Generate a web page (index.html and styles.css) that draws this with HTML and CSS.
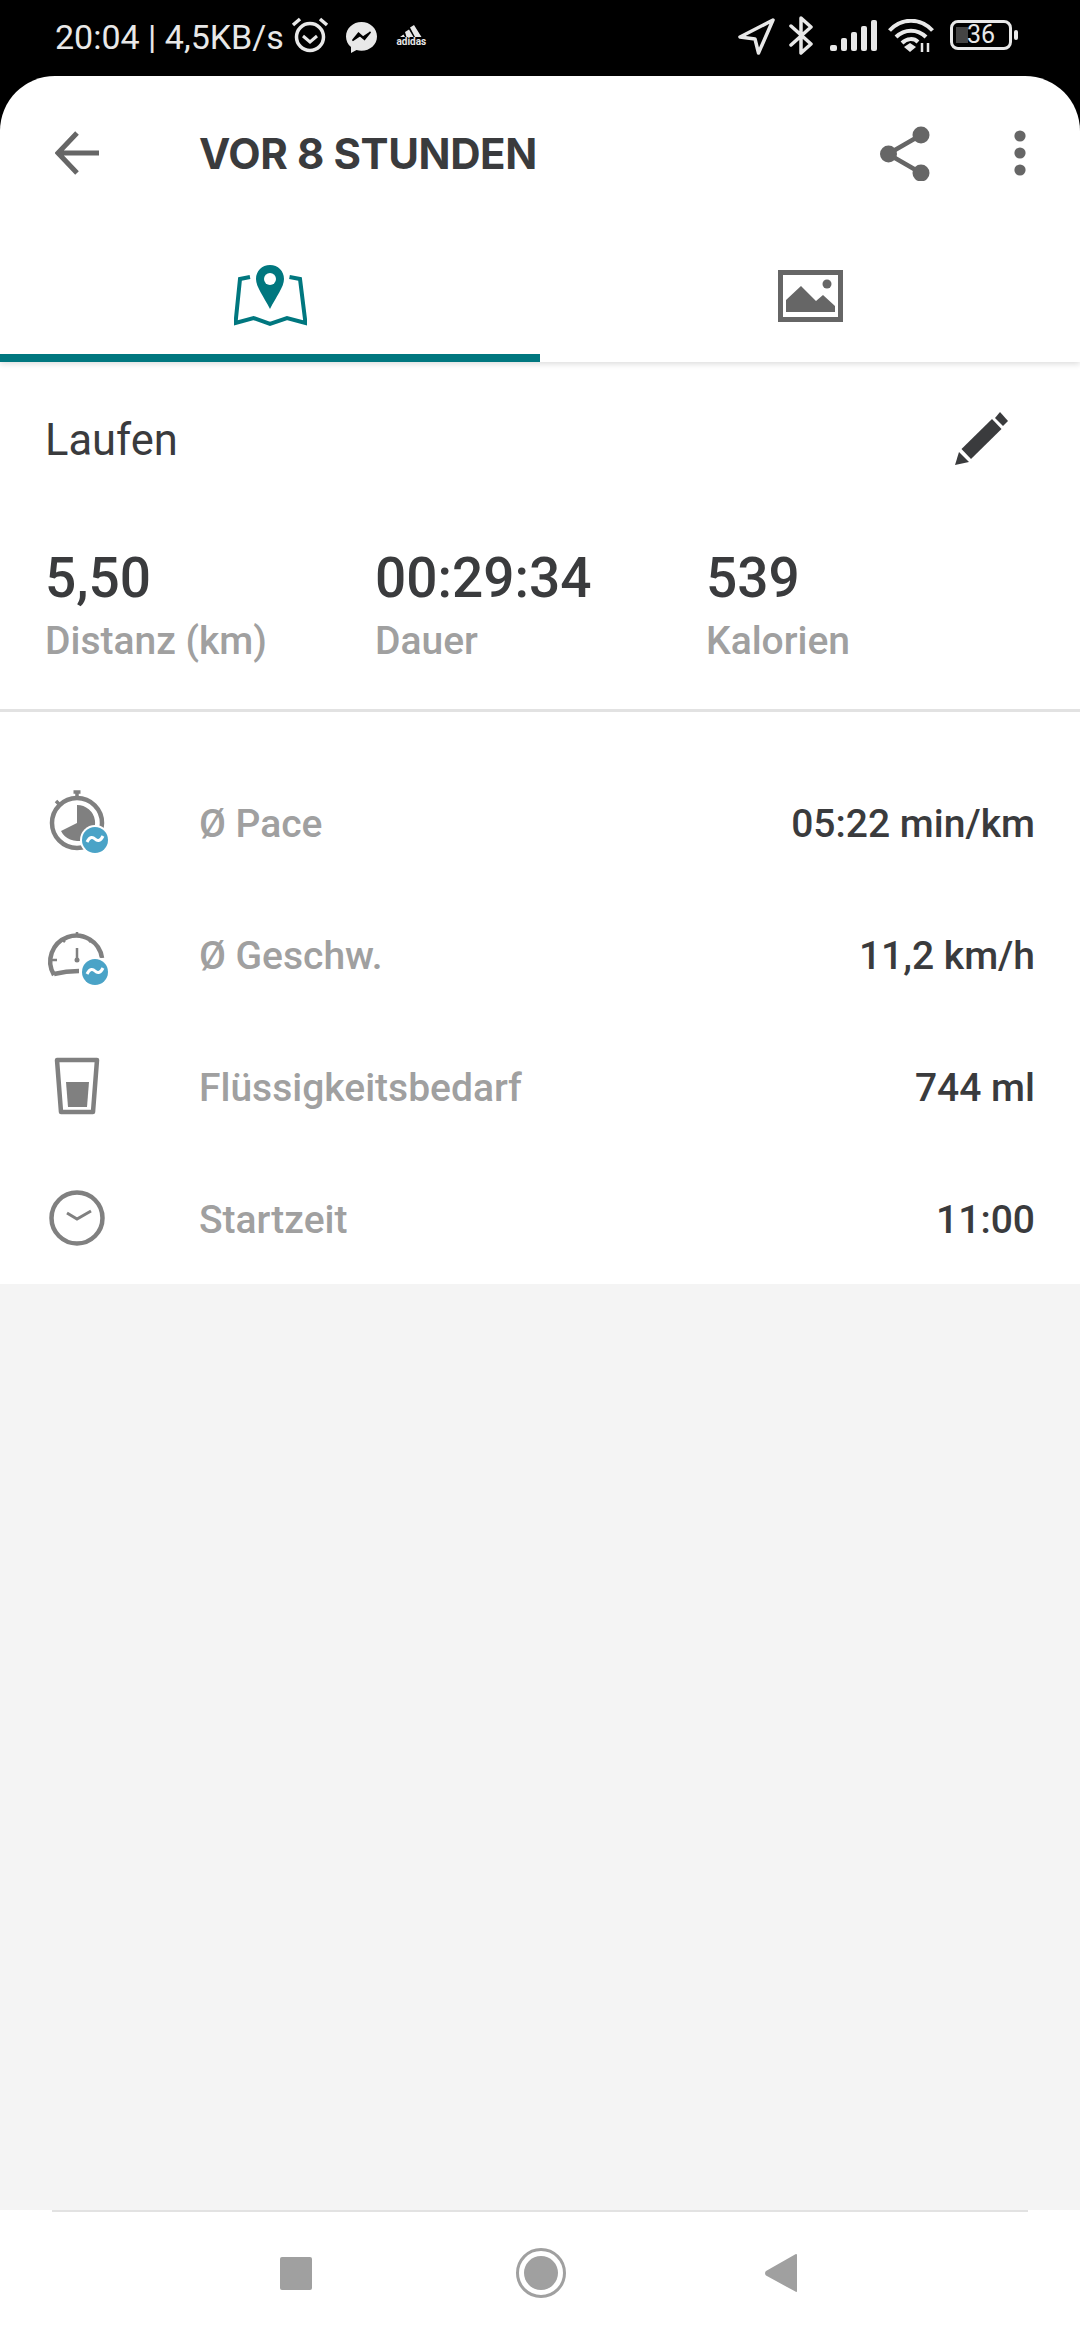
FILE: index.html
```html
<!DOCTYPE html>
<html>
<head>
<meta charset="utf-8">
<title>Laufen</title>
<link rel="stylesheet" href="styles.css">
</head>
<body>
<!-- status bar -->
<div class="statusbar">
    <div class="status-left">
        <span class="status-text">20:04 | 4,5KB/s</span>
        <svg class="st-alarm" width="38" height="36" viewBox="0 0 38 36" fill="none" stroke="#e8e8e8">
            <circle cx="19" cy="20" r="13.5" stroke-width="3.5"/>
            <path d="M12 19l7 6 7-6" stroke-width="3"/>
            <path d="M2 8l7-6M36 8l-7-6" stroke-width="3.5"/>
        </svg>
        <svg class="st-msg" width="31" height="31" viewBox="0 0 31 31">
            <path d="M15.5 0C7 0 0 6.300 0 14.500c0 4.300 1.900 8 5 10.600V31l5.500-3c1.600.5 3.200.7 5 .7 8.500 0 15.500-6 15.500-14.200S24 0 15.500 0z" fill="#e8e8e8"/>
            <path d="M6.500 18.500l6-7.500 4.500 4 7.500-5-6 7.500-4.500-3.800z" fill="#000" stroke="#000" stroke-width="1.500"/>
        </svg>
        <div class="st-adidas">
            <svg width="24" height="13" viewBox="0 0 24 13" fill="#e8e8e8">
                <path d="M1 13l3.500-2.500L6 13zM7.500 13L6 8l4-2.500L14.500 13zM16 13L11 3.500 15 1l7.500 12z"/>
            </svg>
            <span>adidas</span>
        </div>
    </div>
    <div class="status-right">
        <svg class="st-loc" width="37" height="37" viewBox="0 0 37 37" fill="none" stroke="#e8e8e8" stroke-width="3.500" stroke-linejoin="round">
            <path d="M35 2L2 19l15 2 3.500 14z"/>
        </svg>
        <svg class="st-bt" width="25" height="39" viewBox="0 0 25 39" fill="none" stroke="#e8e8e8" stroke-width="3.500" stroke-linejoin="round" stroke-linecap="round">
            <path d="M2 10l20 18-10 9V2l10 9L2 29"/>
        </svg>
        <svg class="st-signal" width="48" height="31" viewBox="0 0 48 31" fill="#e8e8e8">
            <rect x="0" y="25" width="7" height="6" rx="2"/>
            <rect x="11" y="18" width="6" height="13" rx="2"/>
            <rect x="21" y="12" width="6" height="19" rx="2"/>
            <rect x="31" y="6" width="6" height="25" rx="2"/>
            <rect x="41" y="0" width="6" height="31" rx="2"/>
        </svg>
        <svg class="st-wifi" width="46" height="33" viewBox="0 0 46 33" fill="none" stroke="#e8e8e8" stroke-width="4">
            <path d="M1.500 11.500c12-13 31-13 43 0"/>
            <path d="M8 18c8.500-8.500 21.500-8.500 30 0"/>
            <path d="M14 24c5-5 12-5 16-1"/>
            <path d="M16 28l6-4 6 4-6 5z" fill="#e8e8e8" stroke="none"/>
            <path d="M34 33v-9m6 9v-9" stroke-width="2.500"/>
        </svg>
        <div class="st-battery">
            <div class="bat-body">
                <div class="bat-fill"></div>
                <span>36</span>
            </div>
            <div class="bat-cap"></div>
        </div>
    </div>
</div>

<div class="card">
    <!-- top bar -->
    <div class="topbar">
        <svg class="ic-back" width="44" height="44" viewBox="0 0 44 44" fill="none" stroke="#666" stroke-width="5">
            <path d="M22 2L3 22l19 20M3 22h41"/>
        </svg>
        <div class="title">VOR 8 STUNDEN</div>
        <svg class="ic-share" width="50" height="55" viewBox="0 0 50 55" fill="#666" stroke="#666">
            <path d="M41 9L8 28l33 19" fill="none" stroke-width="4.500"/>
            <circle cx="41" cy="9" r="8.500" stroke="none"/>
            <circle cx="8.500" cy="28" r="8.500" stroke="none"/>
            <circle cx="41" cy="47" r="8.500" stroke="none"/>
        </svg>
        <svg class="ic-more" width="12" height="46" viewBox="0 0 12 46" fill="#666">
            <circle cx="6" cy="6" r="5.600"/>
            <circle cx="6" cy="23" r="5.600"/>
            <circle cx="6" cy="40" r="5.600"/>
        </svg>
    </div>

    <!-- tabs -->
    <div class="tabs">
        <div class="tab tab-active">
            <svg width="73" height="62" viewBox="0 0 73 62">
                <path d="M16 12L6 14 1.500 58l18-5L36 59l17-6 18.500 5L66 14l-10.500-2" fill="none" stroke="#00777f" stroke-width="4"/>
                <path d="M36 0c-8 0-14 6-14 14 0 8 8 18 14 30 6-12 14-22 14-30 0-8-6-14-14-14z" fill="#00777f"/>
                <circle cx="36" cy="14" r="6" fill="#fff"/>
            </svg>
        </div>
        <div class="tab">
            <svg width="65" height="52" viewBox="0 0 65 52">
                <rect x="2.500" y="2.500" width="60" height="47" fill="none" stroke="#666" stroke-width="5"/>
                <path d="M8 42V30l15-14 15 15 7-6 12 11v6z" fill="#666"/>
                <circle cx="49" cy="14" r="4.500" fill="#666"/>
            </svg>
        </div>
    </div>

    <!-- activity summary -->
    <div class="summary">
        <div class="sport-row">
            <div class="sport-name">Laufen</div>
            <svg class="ic-edit" width="53" height="54" viewBox="0 0 53 54" fill="#3a3b3d">
                <path d="M0 54l4-13 10 10z"/>
                <path d="M6.500 38L37 8l9.500 10L16 48z"/>
                <path d="M40 7l5-6 8 9-5 5z"/>
            </svg>
        </div>
        <div class="stats">
            <div class="stat">
                <div class="stat-value">5,50</div>
                <div class="stat-label">Distanz (km)</div>
            </div>
            <div class="stat">
                <div class="stat-value">00:29:34</div>
                <div class="stat-label">Dauer</div>
            </div>
            <div class="stat">
                <div class="stat-value">539</div>
                <div class="stat-label">Kalorien</div>
            </div>
        </div>
    </div>

    <!-- detail rows -->
    <div class="details">
        <div class="row">
            <svg class="row-icon" width="64" height="64" viewBox="0 0 64 64" fill="none" stroke="#808080">
                <circle cx="32" cy="33" r="25" stroke-width="4.500"/>
                <path d="M32 8V2M28.500 2h7M14 14l-3-3" stroke-width="3.500"/>
                <path d="M32 33V15A18 18 0 1 1 16 41z" fill="#808080" stroke="none"/>
                <circle cx="50" cy="50" r="15" fill="#fff" stroke="none"/>
                <circle cx="50" cy="50" r="13" fill="#4aa3c7" stroke="none"/>
                <path d="M42 52c3-6 6-5 8-3s5 3 8-3" stroke="#fff" stroke-width="3"/>
            </svg>
            <div class="row-label">Ø Pace</div>
            <div class="row-value">05:22 min/km</div>
        </div>
        <div class="row">
            <svg class="row-icon" width="64" height="64" viewBox="0 0 64 64" fill="none" stroke="#808080">
                <path d="M9 53A26 26 0 1 1 57 36" stroke-width="4.500"/>
                <path d="M9 52c8-2 16-3 25-3" stroke-width="4.500"/>
                <path d="M32 10v5M17 17l3 3M47 17l-3 3M7 38h5M32 26v11" stroke-width="2.500"/>
                <circle cx="32" cy="38" r="2.500" fill="#808080" stroke="none"/>
                <circle cx="50" cy="50" r="15" fill="#fff" stroke="none"/>
                <circle cx="50" cy="50" r="13" fill="#4aa3c7" stroke="none"/>
                <path d="M42 52c3-6 6-5 8-3s5 3 8-3" stroke="#fff" stroke-width="3"/>
            </svg>
            <div class="row-label">Ø Geschw.</div>
            <div class="row-value">11,2 km/h</div>
        </div>
        <div class="row">
            <svg class="row-icon" width="64" height="64" viewBox="0 0 64 64" fill="none" stroke="#808080">
                <path d="M12 6h40l-4 52H16z" stroke-width="4.500" stroke-linejoin="round"/>
                <path d="M21 28h23l-2 25H23z" fill="#808080" stroke="none"/>
            </svg>
            <div class="row-label">Flüssigkeitsbedarf</div>
            <div class="row-value">744 ml</div>
        </div>
        <div class="row">
            <svg class="row-icon" width="64" height="64" viewBox="0 0 64 64" fill="none" stroke="#808080">
                <circle cx="32" cy="32" r="25.500" stroke-width="4.500"/>
                <path d="M22 27l10 6 14-8" stroke-width="3"/>
            </svg>
            <div class="row-label">Startzeit</div>
            <div class="row-value">11:00</div>
        </div>
    </div>

    <div class="empty"></div>

    <!-- system navigation -->
    <div class="navbar">
        <div class="nav-square"></div>
        <div class="nav-home"><div class="nav-home-dot"></div></div>
        <svg class="nav-back" width="32" height="38" viewBox="0 0 32 38" fill="#a0a0a0">
            <path d="M31 0c.6 0 1 .5 1 1v36c0 .9-1 1.300-1.600.6L1 21.500c-1.300-1.300-1.300-3.200 0-4.500L30 .5c.3-.3.6-.5 1-.5z"/>
        </svg>
    </div>
</div>
</body>
</html>
```

FILE: styles.css
```css
* {
    margin: 0;
    padding: 0;
    box-sizing: border-box;
}

html, body {
    width: 1080px;
    height: 2340px;
    overflow: hidden;
}

body {
    background-color: #000;
    font-family: Roboto, "Noto Sans", sans-serif;
    color: #3a3b3d;
    display: flex;
    flex-direction: column;
}

svg {
    display: block;
    flex-shrink: 0;
}

/* status bar */
.statusbar {
    height: 76px;
    display: flex;
    justify-content: space-between;
    align-items: center;
    padding: 0 62px 0 55px;
    color: #e8e8e8;
}

.status-left, .status-right {
    display: flex;
    align-items: center;
}

.status-text {
    font-size: 34px;
    line-height: 40px;
    margin-top: -2px;
}

.st-alarm {
    margin-left: 7px;
    margin-top: -6px;
}

.st-msg {
    margin-left: 17px;
    margin-top: -2px;
}

.st-adidas {
    margin-left: 20px;
    width: 29px;
    display: flex;
    flex-direction: column;
    align-items: center;
    color: #e8e8e8;
    font-size: 10px;
    line-height: 9px;
    font-weight: 700;
    margin-top: -6px;
}

.st-loc {
    margin-right: 14px;
    margin-top: -3px;
}

.st-bt {
    margin-right: 16px;
    margin-top: -6px;
}

.st-signal {
    margin-right: 10px;
    margin-top: -5px;
}

.st-wifi {
    margin-right: 16px;
    margin-top: -5px;
}

.st-battery {
    display: flex;
    align-items: center;
    margin-top: -6px;
}

.bat-body {
    position: relative;
    width: 62px;
    height: 30px;
    border: 3px solid #e8e8e8;
    border-radius: 8px;
    text-align: center;
    font-size: 25px;
    line-height: 24px;
}

.bat-fill {
    position: absolute;
    left: 3px;
    top: 4px;
    width: 12px;
    height: 16px;
    background-color: #444;
}

.bat-body span {
    position: relative;
}

.bat-cap {
    width: 4px;
    height: 10px;
    margin-left: 2px;
    border-radius: 2px;
    background-color: #e8e8e8;
}

/* white sheet below the status bar */
.card {
    flex: 1;
    display: flex;
    flex-direction: column;
    background-color: #fff;
    border-radius: 55px 55px 0 0;
    overflow: hidden;
}

.topbar {
    height: 154px;
    flex-shrink: 0;
    display: flex;
    align-items: center;
    padding: 0 54px 0 55px;
}

.title {
    flex: 1;
    margin-left: 100px;
    font-family: Inter, Roboto, sans-serif;
    font-size: 42px;
    font-weight: 700;
    letter-spacing: -0.4px;
    color: #3a3b3d;
}

.ic-share {
    margin-right: -1px;
}

.ic-more {
    margin-left: 85px;
}

/* tabs */
.tabs {
    height: 132px;
    flex-shrink: 0;
    display: flex;
    box-shadow: 0 2px 6px rgba(0, 0, 0, 0.14);
    clip-path: inset(0 0 -12px 0);
}

.tab {
    width: 540px;
    display: flex;
    justify-content: center;
    align-items: center;
    padding-top: 8px;
    border-bottom: 8px solid transparent;
}

.tab-active {
    border-bottom-color: #00777f;
}

/* summary */
.summary {
    height: 350px;
    flex-shrink: 0;
    padding: 0 45px;
    border-bottom: 3px solid #e2e2e2;
}

.sport-row {
    height: 156px;
    display: flex;
    justify-content: space-between;
    align-items: center;
    padding-right: 27px;
}

.sport-name {
    font-size: 43.500px;
}

.ic-edit {
    margin-top: -4px;
}

.stats {
    display: grid;
    grid-template-columns: 330px 331px 1fr;
    padding-top: 30px;
}

.stat-value {
    font-size: 55px;
    line-height: 60px;
    font-weight: 500;
}

.stat-label {
    margin-top: 8px;
    font-size: 39px;
    line-height: 50px;
    font-weight: 500;
    color: #a0a0a0;
}

/* rows */
.details {
    padding-top: 44px;
    flex-shrink: 0;
}

.row {
    height: 132px;
    display: flex;
    align-items: center;
    padding: 0 45px;
    font-size: 39px;
    line-height: 48px;
    font-weight: 500;
}

.row-icon {
    margin-right: 90px;
}

.row-label, .row-value {
    padding-top: 3px;
}

.row-label {
    flex: 1;
    color: #a0a0a0;
}

.empty {
    flex: 1;
    background-color: #f4f4f4;
}

/* system navigation */
.navbar {
    height: 130px;
    flex-shrink: 0;
    display: flex;
    justify-content: center;
    align-items: center;
    padding: 0 4px 4px 0;
    position: relative;
}

.navbar::before {
    content: "";
    position: absolute;
    left: 52px;
    right: 52px;
    top: 0;
    height: 2px;
    background-color: #e2e2e2;
}

.nav-square {
    width: 32px;
    height: 33px;
    border-radius: 2px;
    background-color: #a0a0a0;
}

.nav-home {
    width: 50px;
    height: 50px;
    margin: 0 199px 0 204px;
    border-radius: 50%;
    border: 3px solid #a0a0a0;
    padding: 5px;
}

.nav-home-dot {
    width: 34px;
    height: 34px;
    border-radius: 50%;
    background-color: #a0a0a0;
}
```
